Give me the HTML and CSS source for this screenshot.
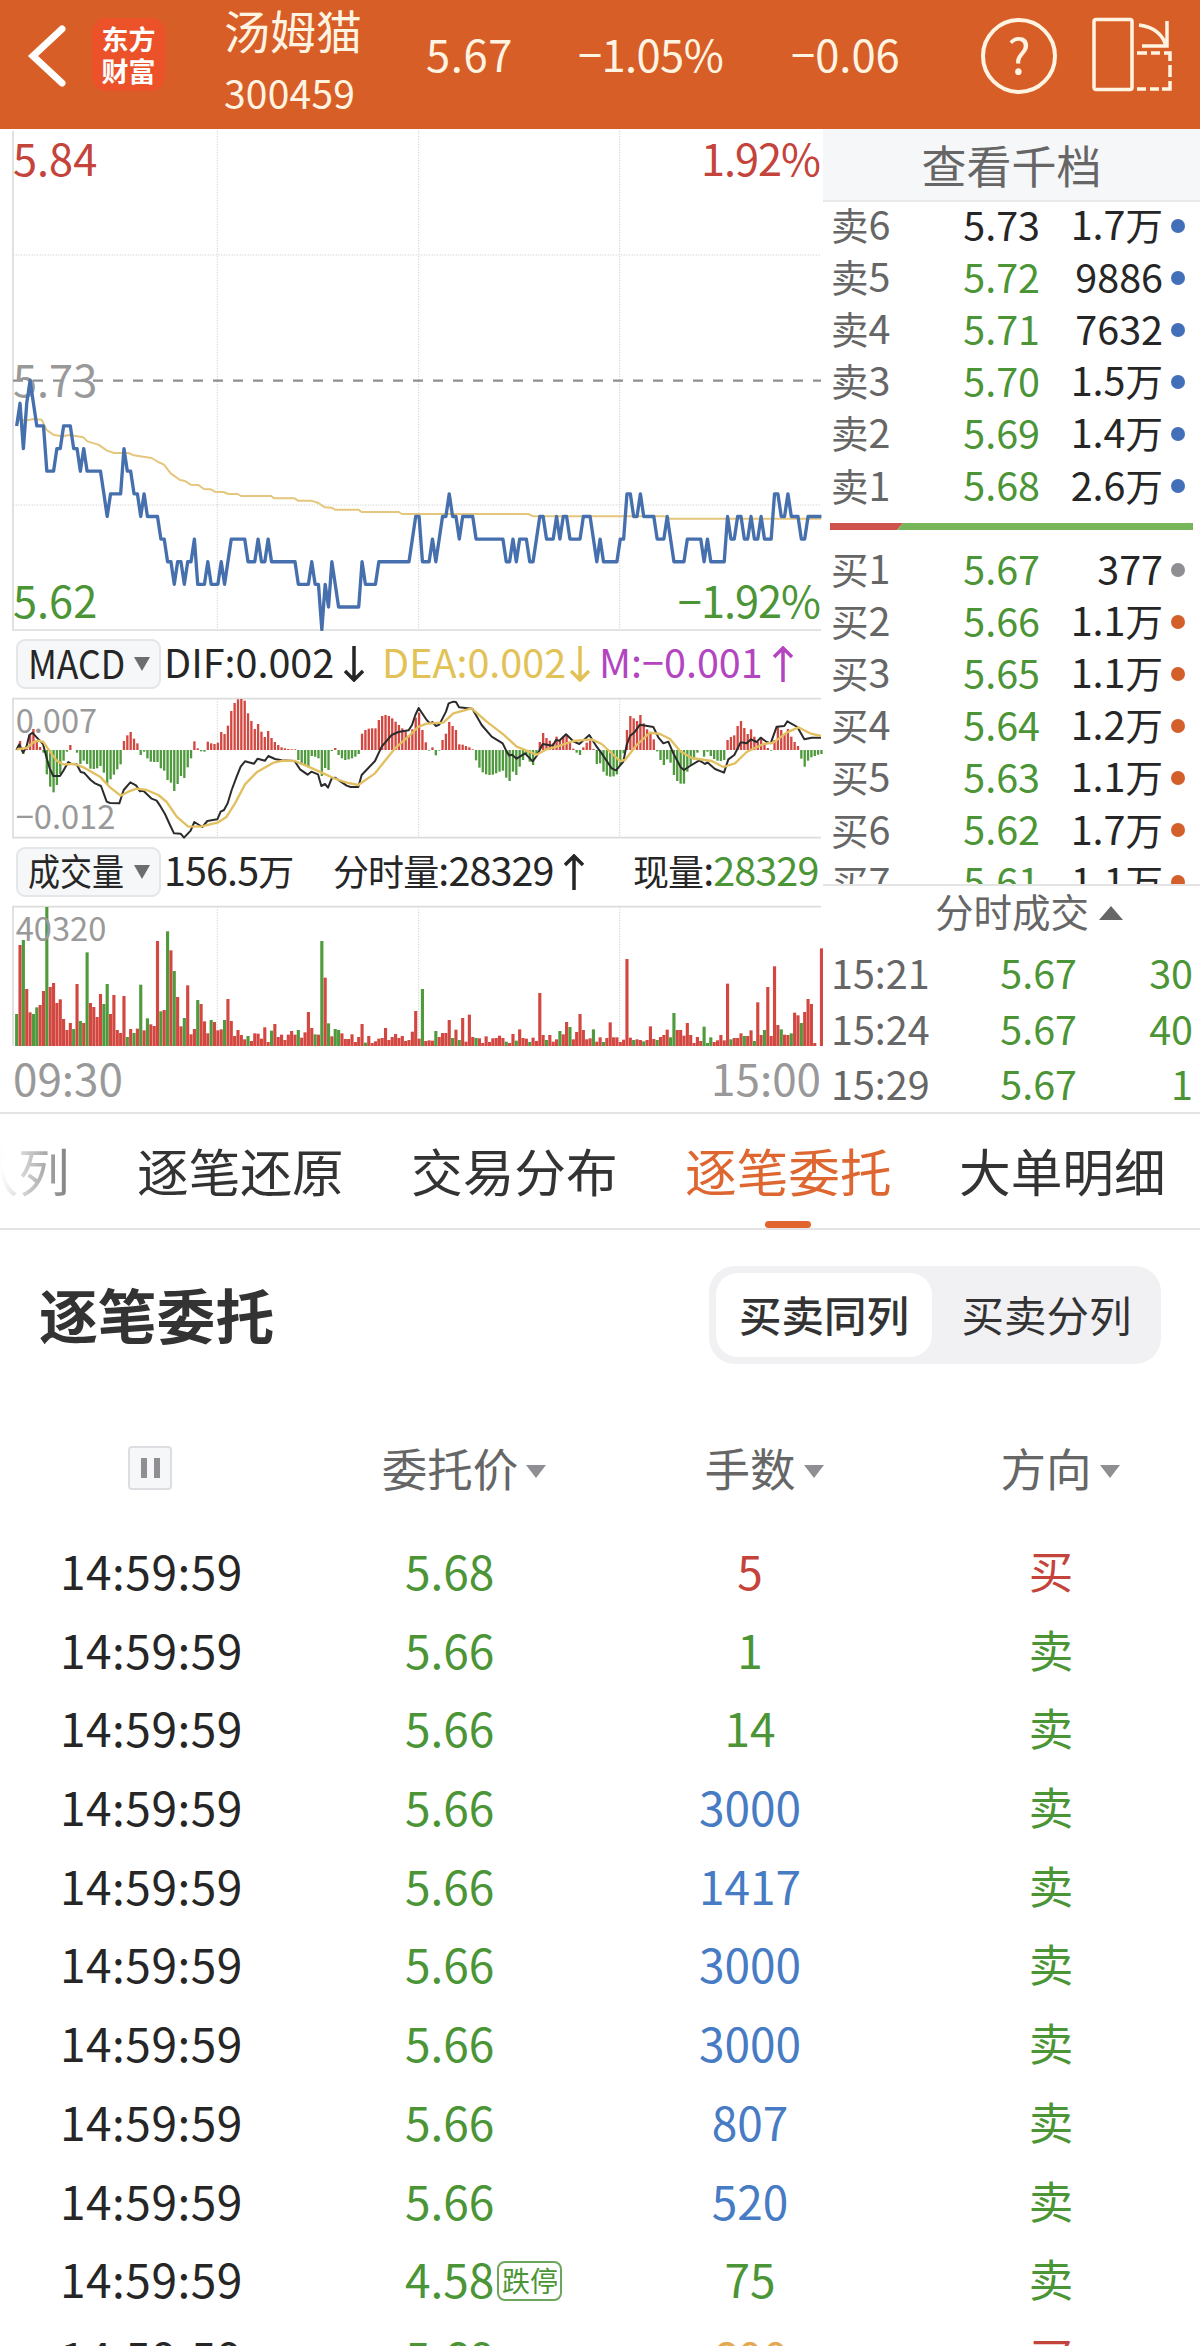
FILE: index.html
```html
<!DOCTYPE html>
<html lang="zh-CN">
<head>
    <meta charset="utf-8">
    <title>汤姆猫 300459</title>
    <meta name="viewport" content="width=1200">
    <link rel="stylesheet" href="styles.css">
</head>
<body>
    <!-- Header -->
    <header class="header">
        <svg class="back" width="40" height="64" viewBox="0 0 40 64"><path d="M35 5 L6 32 L35 59" /></svg>
        <div class="logo"><span>东方</span><span>财富</span></div>
        <div class="stock">
            <div class="stock-name">汤姆猫</div>
            <div class="stock-code">300459</div>
        </div>
        <div class="quote">
            <span>5.67</span>
            <span>−1.05%</span>
            <span>−0.06</span>
        </div>
        <div class="help">?</div>
        <svg class="rotate" width="82" height="76" viewBox="0 0 82 76">
            <rect x="2" y="2.500" width="38" height="70" rx="2" />
            <path d="M47 8 Q69 11 74 29 M75 4 V29 H50" />
            <path d="M45 36 H55 M59 36 H68 M72 36 H78 V44 M78 48 V60 M78 64 V72 H70 M67 72 H58 M54 72 H45" />
        </svg>
    </header>

    <main class="market">
        <!-- Charts -->
        <section class="charts">
            <svg class="chart" id="price" width="823" height="502" viewBox="0 0 2469 1506"></svg>

            <div class="toolbar">
                <button class="picker"><span class="picker-text macd">MACD</span><i class="caret"></i></button>
                <div class="figures macd-figures">
                    <span>DIF:0.002<svg class="arrow" viewBox="0 0 20 36"><path d="M10 0 V34 M1 25 L10 34 L19 25" /></svg></span>
                    <span class="dea">DEA:0.002<svg class="arrow near" viewBox="0 0 20 36"><path d="M10 0 V34 M1 25 L10 34 L19 25" /></svg></span>
                    <span class="hist">M:−0.001<svg class="arrow" viewBox="0 0 20 36"><path d="M10 36 V2 M1 11 L10 2 L19 11" /></svg></span>
                </div>
            </div>
            <svg class="chart" id="macd" width="823" height="142" viewBox="0 0 2469 426"></svg>

            <div class="toolbar">
                <button class="picker"><span class="picker-text">成交量</span><i class="caret"></i></button>
                <div class="figures vol-figures">
                    <span>156.5<small>万</small></span>
                    <span><small>分时量</small>:28329<svg class="arrow" viewBox="0 0 20 36"><path d="M10 36 V2 M1 11 L10 2 L19 11" /></svg></span>
                    <span><small>现量</small>:<b class="green">28329</b></span>
                </div>
            </div>
            <svg class="chart" id="volume" width="823" height="142" viewBox="0 0 2469 426"></svg>
            <div class="axis"><span>09:30</span><span>15:00</span></div>
        </section>

        <!-- Order book -->
        <aside class="book">
            <div class="book-head">查看千档</div>
            <div class="levels" id="asks"></div>
            <svg class="ratio" width="363" height="7" viewBox="0 0 363 7">
                <path class="fill-bid" d="M0 0 H73 L67 7 H0 Z" />
                <path class="fill-ask" d="M73 0 H363 V7 H67 Z" />
            </svg>
            <div class="levels bids" id="bids"></div>
            <div class="ticks">
                <div class="ticks-head">分时成交<i class="caret-up"></i></div>
                <div class="tick"><span>15:21</span><span>5.67</span><span>30</span></div>
                <div class="tick"><span>15:24</span><span>5.67</span><span>40</span></div>
                <div class="tick"><span>15:29</span><span>5.67</span><span>1</span></div>
            </div>
        </aside>
    </main>

    <nav class="tabs">
        <a>买卖队列</a>
        <a>逐笔还原</a>
        <a>交易分布</a>
        <a class="active">逐笔委托</a>
        <a>大单明细</a>
    </nav>

    <!-- Order flow -->
    <section class="orders">
        <div class="orders-head">
            <h2>逐笔委托</h2>
            <div class="segment"><span class="on">买卖同列</span><span>买卖分列</span></div>
        </div>
        <div class="order cols">
            <span class="time"><i class="pause"></i></span>
            <span>委托价<i class="sort"></i></span>
            <span>手数<i class="sort"></i></span>
            <span>方向<i class="sort"></i></span>
        </div>
        <div id="orders"></div>
    </section>

    <script src="script.js"></script>
</body>
</html>
```

FILE: styles.css
```css
* { margin: 0; padding: 0; box-sizing: border-box; }
body { width: 1200px; height: 2346px; overflow: hidden; background: #fff; color: #262626; font: 39.5px/52px "Noto Sans CJK SC", sans-serif; }
i, b, small { font-style: normal; font-weight: normal; }
.green { color: #4b9536; }
.red { color: #c4433b; }
.blue { color: #477bc4; }
.orange { color: #e3a851; }

/* header */
.header { display: flex; height: 129px; background: #d75f27; color: #fff4e2; }
.back { margin: 24px 0 0 27px; fill: none; stroke: #fff; stroke-width: 7; stroke-linecap: round; }
.logo { display: flex; flex-direction: column; justify-content: center; width: 73px; height: 73px; margin: 18px 0 0 25px; border-radius: 14px; background: #eb5229; color: #fff; font-size: 27px; font-weight: bold; line-height: 32px; text-align: center; }
.stock { width: 202px; margin-left: 59px; }
.stock-name { font-size: 46px; line-height: 58px; }
.stock-code { margin-top: 7px; font-size: 39px; line-height: 54px; letter-spacing: .2px; }
.quote { display: grid; grid-template-columns: 152px 213px 192px; padding-top: 26px; font-size: 43.5px; line-height: 56px; }
.quote span:first-child { letter-spacing: .6px; }
.quote span:nth-child(2) { letter-spacing: -.6px; }
.help { width: 76px; height: 76px; margin: 18px 0 0 -2px; border: 4px solid #fff4e2; border-radius: 50%; font-size: 49px; line-height: 62px; text-align: center; }
.rotate { margin: 17px 0 0 35px; fill: none; stroke: #fff4e2; stroke-width: 3.500; }

/* charts */
.market { display: flex; height: 985px; border-bottom: 2px solid #e4e4e4; }
.charts { width: 823px; }
.chart { display: block; }
.chart text { font-size: 130px; }
.chart .tight { letter-spacing: -3px; }
.chart .small { font-size: 98px; fill: #999; }
.frame { stroke: #dcdcdc; stroke-width: 5; fill: none; }
.grid { stroke: #d4d4d4; stroke-width: 3; stroke-dasharray: 4 4; }
.prev { stroke: #8f8f8f; stroke-width: 7; stroke-dasharray: 30 30; }
.line { fill: none; stroke-width: 10; stroke-linejoin: round; }
.line.now { stroke: #466fad; }
.line.avg { stroke: #e4c67c; stroke-width: 6; }
.line.dif { stroke: #2b2b2b; stroke-width: 6; }
.line.dea { stroke: #e2c060; stroke-width: 7; }
.t-red { fill: #c4433b; }
.t-green { fill: #4b9536; }
.t-gray { fill: #999; }
.bar-up { fill: #d24740; }
.bar-down { fill: #4f9a3d; }
.toolbar { display: flex; align-items: center; height: 66px; padding-left: 16px; }
.picker { display: flex; align-items: center; width: 145px; height: 50px; padding: 0 0 5px 10px; border: 2px solid #e4e6e9; border-radius: 9px; background: #f6f7f9; color: #262626; font: 37px/44px "Noto Sans CJK SC", sans-serif; }
.picker-text { width: 106px; text-align: left; white-space: nowrap; transform: scaleX(.865); transform-origin: left; }
.picker-text.macd { font-size: 39.5px; transform: scaleX(.9); }
.caret { margin-top: 4px; border: 8px solid transparent; border-top: 14px solid #6d6d6d; border-bottom: 0; }
.figures { display: grid; margin: -6px 0 0 3px; line-height: 50px; white-space: nowrap; }
.figures small { font-size: 36px; }
.macd-figures { grid-template-columns: 218px 217px 210px; }
.vol-figures { grid-template-columns: 169px 300px 190px; letter-spacing: -.9px; }
.arrow { width: 20px; height: 36px; margin-left: 10px; vertical-align: -4px; fill: none; stroke: currentColor; stroke-width: 3.500; }
.arrow.near { margin-left: 4px; }
.figures .dea { color: #e2c257; }
.hist { color: #b345c0; }
.axis { display: flex; justify-content: space-between; padding: 2px 2px 0 13px; color: #999; font-size: 44px; line-height: 57px; }

/* order book */
.book { display: flex; flex-direction: column; width: 377px; }
.book-head { flex: none; height: 73px; border-bottom: 2px solid #e9e9e9; background: #f6f7f9; color: #666; font-size: 45px; line-height: 71px; text-align: center; }
.levels { flex: none; height: 321px; overflow: hidden; }
.bids { margin-top: 16px; height: 338px; }
.level { display: grid; grid-template-columns: 109px 100px 123px 14px; align-items: center; height: 52.1px; padding: 0 0 3px 8px; line-height: 46px; white-space: nowrap; text-align: right; }
.level:first-child { margin-top: -3px; }
.level small { font-size: 37.5px; }
.level-name { color: #666; text-align: left; }
.level .dot { width: 14px; height: 14px; margin: 4px 0 0 8px; border-radius: 50%; background: #426fb8; }
.level .dot.buy { background: #d3602b; }
.level .dot.none { background: #8e8e93; }
.ratio { flex: none; margin-left: 7px; }
.fill-bid { fill: #d0524c; }
.fill-ask { fill: #77b55b; }
.ticks { border-top: 2px solid #e4e4e4; }
.ticks-head { display: flex; align-items: center; height: 58px; padding: 0 0 9px 112px; color: #666; font-size: 38.5px; line-height: 49px; }
.caret-up { margin: 4px 0 0 10px; border: 12px solid transparent; border-bottom: 14px solid #666; border-top: 0; }
.tick { display: grid; grid-template-columns: 162px 84px 116px; height: 55.6px; padding-left: 8px; color: #4b9536; line-height: 56px; text-align: right; }
.tick span:first-child { color: #666; text-align: left; }

/* tabs */
.tabs { position: relative; display: flex; gap: 67px; height: 116px; overflow: hidden; border-bottom: 2px solid #e4e4e4; font-size: 51.7px; line-height: 111px; color: #333; }
.tabs a { position: relative; flex: none; width: 207px; white-space: nowrap; }
.tabs a:first-child { margin-left: -137px; }
.tabs .active { color: #de6630; }
.tabs .active::after { content: ""; position: absolute; left: 80px; bottom: 0; width: 46px; height: 7px; border-radius: 4px; background: #e2642e; }
.tabs::before { content: ""; position: absolute; z-index: 1; left: 0; top: 0; width: 110px; height: 112px; background: linear-gradient(90deg, #fff, rgba(255, 255, 255, 0)); }

/* order flow */
.orders-head { display: flex; justify-content: space-between; padding: 36px 39px 0 39px; }
h2 { padding-top: 5px; font-size: 58.8px; line-height: 86px; color: #333; }
.segment { display: flex; width: 452px; height: 98px; padding: 7px; border-radius: 26px; background: #f1f1f4; color: #333; font-size: 42.5px; line-height: 82px; text-align: center; }
.segment span { flex: none; width: 216px; height: 84px; border-radius: 22px; }
.segment span:last-child { width: 222px; padding-left: 7px; }
.segment .on { background: #fff; font-weight: 500; }
.order { display: grid; grid-template-columns: 300px 300px 300px 302px; height: 78.7px; font-size: 46px; line-height: 74px; text-align: center; }
.order .time { text-align: left; padding-left: 60px; }
#orders .time { letter-spacing: .5px; }
.order .price { display: flex; align-items: center; height: 74px; padding-left: 105px; }
.order .side { font-size: 44.5px; }
.cols { align-items: center; height: 169px; padding-top: 36px; color: #666; font-size: 45.5px; }
.cols span:nth-child(2) { padding-left: 28px; }
.cols span:nth-child(3) { padding-left: 28px; }
.cols span:nth-child(4) { padding-left: 18px; }
.cols .time { padding-left: 128px; }
.sort { display: inline-block; margin-left: 8px; vertical-align: 9px; border: 10px solid transparent; border-top: 13px solid #8e8e93; border-bottom: 0; }
.pause { display: block; width: 44px; height: 44px; margin-top: 3px; border: 2px solid #dcdee1; border-radius: 4px; background: linear-gradient(#8e8e93, #8e8e93) 11px 10px / 6px 20px no-repeat, linear-gradient(#8e8e93, #8e8e93) 24px 10px / 6px 20px no-repeat, #f6f7f9; }
.tag { width: 65px; height: 40px; margin: 5px 0 0 3px; border: 2px solid #6da55c; border-radius: 8px; font-size: 28px; line-height: 34px; text-align: center; white-space: nowrap; }
```

FILE: script.js
```js
// Chart units are thirds of a pixel, one minute is STEP wide
const X0 = 50;
const STEP = 10.06;
const GRID_X = [652, 1256, 1859];

// price line as minute:ticks below the previous close
const price = `0:2 1:1 2:3 3:1 4:0 5:1 6:2 8:2 9:4 11:4 12:3 13:3 14:2 16:2 17:3 18:3 19:4 20:3 21:4 25:4 26:5 27:6 28:5 31:5 32:3 33:4 34:4 35:5
36:5 37:6 38:5 39:6 42:6 43:7 44:7 45:8 46:8 47:9 48:8 49:8 50:9 51:8 52:8 53:7 54:9 56:9 57:8 58:9 60:9 61:8 62:9 64:7 68:7 69:8 71:8 72:7
73:8 74:8 75:7 76:8 83:8 84:9 87:9 88:8 89:9 90:9 91:11 92:9 93:10 94:8 95:9 96:10 102:10 103:8 104:9 107:9 108:8 117:8 118:7 119:6 120:6
121:8 123:8 124:7 125:8 126:7 127:6 128:6 129:5 130:6 131:6 132:7 133:6 136:6 137:7 145:7 146:8 147:8 148:7 149:8 150:7 152:7 153:8 154:8
155:7 156:6 157:6 158:7 160:7 161:6 162:7 163:6 164:6 165:7 168:7 169:6 171:6 172:7 173:8 174:7 175:8 179:8 180:7 181:7 182:5 183:5 184:6
185:6 186:5 187:6 190:6 191:7 193:7 194:6 195:7 196:8 199:8 200:7 204:7 205:8 206:7 207:8 211:8 212:6 213:7 214:7 215:6 216:6 217:7 218:7
219:6 220:7 221:7 222:6 223:7 225:7 226:5 227:5 228:6 229:6 230:5 231:6 233:6 234:7 235:7 236:6 240:6`;

const average = '50,215 62,208 75,212 100,207 125,209 140,240 160,254 185,259 209,255 250,262 262,274 295,284 320,301 342,309 385,309 402,316 430,320 455,324 475,336 492,344 512,370 540,390 555,393 572,404 595,405 612,417 632,418 645,425 670,426 685,432 713,432 723,438 813,438 823,445 884,445 894,452 934,452 955,459 975,472 995,473 1005,479 1075,479 1085,486 1196,486 1206,492 1585,492 1600,499 1995,499 2010,506 2463,506';

const hist = [3,27,-12,12,48,63,30,9,-8,-73,-110,-127,-105,-72,-32,-5,15,0,-8,-42,-32,-42,-56,-57,-55,-48,-68,-103,-88,-74,-58,-43,27,44,54,34,20,-15,-5,-25,
    -35,-36,-36,-55,-62,-90,-98,-123,-102,-78,-84,-52,-25,26,5,-4,-5,25,20,18,22,54,48,73,117,141,152,153,148,110,87,63,78,55,39,57,36,24,15,8,
    5,3,2,2,-30,-45,-46,-52,-18,-20,-25,-78,-54,-60,-3,6,-15,-25,-30,-28,-25,-20,-12,49,60,64,65,65,90,102,105,102,95,85,75,65,55,45,62,97,
    112,60,23,-2,8,-16,-2,30,49,84,72,60,17,16,12,8,2,-31,-53,-67,-73,-75,-74,-70,-65,-62,-83,-93,-65,-75,-50,-30,-15,-35,-45,-15,24,51,36,28,
    20,40,30,40,46,23,4,-8,-15,8,22,28,3,-42,-40,-65,-77,-80,-79,-73,-45,-10,60,102,95,87,105,80,62,50,32,-4,-30,-45,-28,-38,-75,-93,-101,-101,
    -65,-45,-28,-8,0,-20,-5,-18,-27,-32,-33,-30,30,39,44,72,87,66,48,62,40,24,36,15,6,-2,30,72,60,48,63,40,24,12,-26,-50,-32,-22,-18,-14,-12];

const dif = '50,358 58,343 69,368 79,352 88,315 97,308 110,322 129,342 139,380 149,415 160,438 180,438 190,422 205,396 215,402 230,403 242,426 252,428 272,450 285,460 303,468 320,515 330,519 358,520 371,480 391,457 408,466 420,484 430,482 455,506 470,512 482,530 495,552 510,585 522,610 542,611 552,623 572,602 583,576 607,591 622,573 652,568 662,545 672,540 683,520 695,480 710,440 722,410 735,394 762,401 773,386 795,392 805,378 825,387 845,391 884,393 900,418 923,434 934,425 954,433 964,468 975,462 984,473 995,446 1005,443 1040,467 1052,471 1075,471 1085,435 1125,393 1145,350 1175,315 1195,306 1226,301 1236,285 1246,255 1256,234 1280,270 1290,280 1297,276 1308,288 1318,284 1338,245 1346,220 1360,215 1368,216 1377,232 1417,236 1445,285 1475,320 1508,340 1520,365 1528,377 1536,374 1550,386 1575,370 1598,394 1610,378 1628,342 1658,347 1668,330 1678,332 1698,313 1720,334 1738,342 1768,315 1790,350 1805,370 1835,415 1848,421 1870,395 1880,345 1890,318 1905,305 1920,284 1960,291 1975,322 1990,340 2005,335 2020,370 2042,412 2052,420 2070,408 2098,391 2115,402 2122,397 2145,417 2172,428 2185,388 2203,375 2222,337 2240,340 2253,328 2270,336 2282,323 2300,336 2312,340 2330,290 2353,288 2362,274 2392,291 2413,328 2435,323 2463,323';
const dea = '50,358 80,354 100,337 115,332 130,336 150,365 170,392 190,403 225,402 250,412 300,440 330,472 362,497 385,485 410,476 440,480 475,495 500,516 530,560 565,590 605,589 655,577 680,560 705,520 735,463 770,427 820,398 850,392 885,393 930,412 970,430 1000,444 1040,458 1075,465 1125,430 1185,355 1225,320 1256,290 1280,281 1330,278 1360,250 1415,235 1460,275 1510,313 1550,350 1610,374 1640,358 1680,347 1720,333 1775,328 1805,342 1860,393 1875,390 1910,345 1950,308 1980,312 2010,327 2040,363 2075,384 2135,393 2170,411 2205,400 2240,366 2290,342 2320,338 2360,308 2395,292 2430,310 2463,318';

// volume per minute, negative for a falling minute
const volume = [-96,303,-318,171,101,-96,-116,123,165,-417,177,189,129,140,81,48,69,-51,186,-75,69,-281,129,117,87,156,-126,-186,96,153,48,39,150,-27,51,-39,52,-184,47,-83,
    65,60,315,-104,108,-344,287,-225,147,59,-84,182,35,51,-138,126,74,38,-78,72,47,50,-78,141,75,30,48,33,20,-30,15,38,37,22,56,12,-46,66,27,34,
    18,34,45,34,-48,25,41,102,54,-35,34,-315,205,-68,29,-51,-48,38,21,21,35,12,27,66,-10,30,9,14,22,24,54,18,27,36,24,30,15,18,43,105,
    22,-171,15,17,16,-45,27,39,39,78,-24,49,-18,84,13,94,27,-24,23,9,29,12,23,24,31,24,-13,9,36,-16,50,24,22,-12,25,15,159,33,-18,33,
    13,20,-45,35,72,-57,20,42,96,48,20,23,-50,13,26,-12,24,71,26,26,12,19,261,25,-18,20,18,-14,18,59,21,-18,27,33,49,-26,-99,48,48,31,
    69,33,9,27,15,-58,-9,-26,12,17,33,17,187,-20,24,24,38,-30,30,47,-15,131,33,-48,177,30,239,63,-50,34,33,-38,100,92,-69,102,141,126,9,0,293];

function gridLines(bottom) {
    return GRID_X.map(x => `<path class="grid" d="M${x} 5 V${bottom}" />`).join('');
}

function bars(values, base, width) {
    return values.map((v, i) => {
        const x = (X0 + i * STEP - width / 2).toFixed(1);
        const h = Math.abs(v);
        const y = base === 360 && v < 0 ? base : base - h;
        return `<rect class="${v > 0 ? 'bar-up' : 'bar-down'}" x="${x}" y="${y}" width="${width}" height="${h}" />`;
    }).join('');
}

function drawPrice() {
    const points = price.split(/\s+/).map(p => {
        const [i, k] = p.split(':').map(Number);
        return `${(X0 + i * STEP).toFixed(1)},${(92 + k * 67.9).toFixed(1)}`;
    }).join(' ');
    document.getElementById('price').innerHTML = `
        <path class="grid" d="M39 378 H2463 M39 1128 H2463" />${gridLines(1500)}
        <path class="frame" d="M39 5 V1503 H2463" />
        <path class="prev" d="M39 755 H2463" />
        <text class="t-gray" x="39" y="803">5.73</text>
        <g transform="translate(0 663)">
            <polyline class="line avg" points="${average}" />
            <polyline class="line now" points="${points}" />
        </g>
        <text class="t-red" x="39" y="141">5.84</text>
        <text class="t-red tight" x="2460" y="141" text-anchor="end">1.92%</text>
        <text class="t-green" x="39" y="1466">5.62</text>
        <text class="t-green tight" x="2460" y="1466" text-anchor="end">−1.92%</text>`;
}

function drawMacd() {
    document.getElementById('macd').innerHTML = `
        ${gridLines(420)}<path class="frame" d="M2463 5 H39 V422 H2463" />
        <g transform="translate(0 -201)">${bars(hist, 360, 7)}</g>
        <text class="small" x="47" y="109">0.007</text>
        <text class="small" x="47" y="395">−0.012</text>
        <g transform="translate(0 -201)">
            <polyline class="line dif" points="${dif}" />
            <polyline class="line dea" points="${dea}" />
        </g>`;
}

function drawVolume() {
    document.getElementById('volume').innerHTML = `
        ${gridLines(420)}<path class="frame" d="M2463 5 H39 V422" />${bars(volume, 423, 9.4)}
        <text class="small" x="47" y="109">40320</text>`;
}

function levelRow([name, p, qty, dot]) {
    const amount = qty.replace('万', '<small>万</small>');
    const color = p === '5.73' ? '' : 'green';
    return `<div class="level"><span class="level-name"><small>${name[0]}</small>${name[1]}</span><span class="${color}">${p}</span><span>${amount}</span><i class="dot ${dot}"></i></div>`;
}

const asks = [['卖6', '5.73', '1.7万', ''], ['卖5', '5.72', '9886', ''], ['卖4', '5.71', '7632', ''], ['卖3', '5.70', '1.5万', ''], ['卖2', '5.69', '1.4万', ''], ['卖1', '5.68', '2.6万', '']];
const bids = [['买1', '5.67', '377', 'none'], ['买2', '5.66', '1.1万', 'buy'], ['买3', '5.65', '1.1万', 'buy'], ['买4', '5.64', '1.2万', 'buy'], ['买5', '5.63', '1.1万', 'buy'], ['买6', '5.62', '1.7万', 'buy'], ['买7', '5.61', '1.1万', 'buy']];

const orders = [
    ['5.68', '5', 'red', '买'],
    ['5.66', '1', 'green', '卖'],
    ['5.66', '14', 'green', '卖'],
    ['5.66', '3000', 'blue', '卖'],
    ['5.66', '1417', 'blue', '卖'],
    ['5.66', '3000', 'blue', '卖'],
    ['5.66', '3000', 'blue', '卖'],
    ['5.66', '807', 'blue', '卖'],
    ['5.66', '520', 'blue', '卖'],
    ['4.58', '75', 'green', '卖', '跌停'],
    ['5.68', '600', 'orange', '买']
];

function orderRow([p, qty, color, side, tag]) {
    return `<div class="order"><span class="time">14:59:59</span><span class="price green">${p}${tag ? `<i class="tag">${tag}</i>` : ''}</span><span class="${color}">${qty}</span><span class="side ${side === '买' ? 'red' : 'green'}">${side}</span></div>`;
}

drawPrice();
drawMacd();
drawVolume();
document.getElementById('asks').innerHTML = asks.map(levelRow).join('');
document.getElementById('bids').innerHTML = bids.map(levelRow).join('');
document.getElementById('orders').innerHTML = orders.map(orderRow).join('');
```
